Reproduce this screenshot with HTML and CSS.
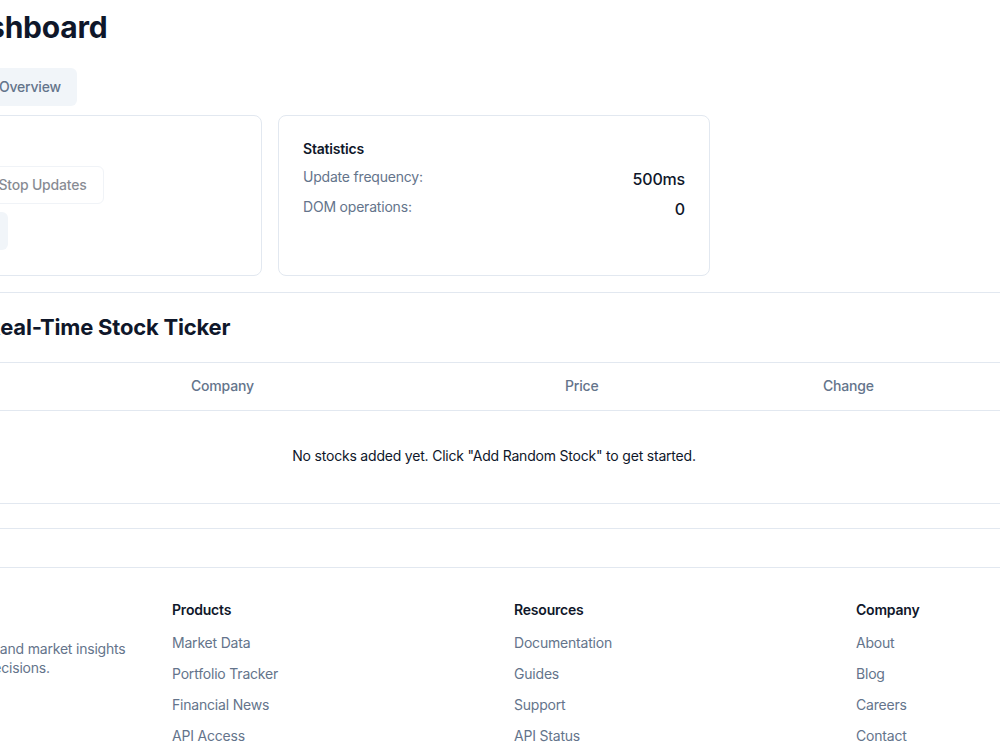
FILE: index.html
```html
<!DOCTYPE html>
<html lang="en">
<head>
<meta charset="utf-8">
<title>Market Dashboard</title>
<link rel="stylesheet" href="styles.css">
</head>
<body>
<div class="page">
  <header class="top">
    <h1 class="title">Market Dashboard</h1>
    <div class="tabs">
      <button class="tab tab-active">Real-Time Ticker</button>
      <button class="tab">Overview</button>
    </div>
  </header>

  <div class="cards">
    <div class="card panel controls">
      <h3 class="panel-title">Controls</h3>
      <div class="btn-row">
        <button class="btn btn-primary">Start Updates</button>
        <button class="btn btn-outline" disabled>Stop Updates</button>
        <button class="btn btn-secondary">Add Random Stock</button>
      </div>
    </div>
    <div class="card panel">
      <h3 class="panel-title">Statistics</h3>
      <div class="stat-row"><span class="stat-label">Update frequency:</span><span class="stat-value">500ms</span></div>
      <div class="stat-row"><span class="stat-label">DOM operations:</span><span class="stat-value">0</span></div>
    </div>
  </div>

  <section class="card ticker">
    <div class="ticker-head">
      <h2 class="ticker-title">Optimized Real-Time Stock Ticker</h2>
    </div>
    <div class="ticker-body">
      <table class="stock-table">
        <colgroup>
          <col class="c1"><col class="c2"><col class="c3"><col class="c4"><col class="c5">
        </colgroup>
        <thead>
          <tr><th>Symbol</th><th>Company</th><th>Price</th><th>Change</th><th>Volume</th></tr>
        </thead>
        <tbody>
          <tr><td class="empty" colspan="5">No stocks added yet. Click "Add Random Stock" to get started.</td></tr>
        </tbody>
      </table>
    </div>
  </section>

  <footer class="footer">
    <div class="footer-grid">
      <div class="footer-col">
        <div class="brand">StockTracker</div>
        <p class="brand-text">Get real-time stock prices and market insights to help you make better decisions.</p>
      </div>
      <div class="footer-col">
        <h4 class="footer-head">Products</h4>
        <ul class="links">
          <li><a href="#">Market Data</a></li>
          <li><a href="#">Portfolio Tracker</a></li>
          <li><a href="#">Financial News</a></li>
          <li><a href="#">API Access</a></li>
        </ul>
      </div>
      <div class="footer-col">
        <h4 class="footer-head">Resources</h4>
        <ul class="links">
          <li><a href="#">Documentation</a></li>
          <li><a href="#">Guides</a></li>
          <li><a href="#">Support</a></li>
          <li><a href="#">API Status</a></li>
        </ul>
      </div>
      <div class="footer-col">
        <h4 class="footer-head">Company</h4>
        <ul class="links">
          <li><a href="#">About</a></li>
          <li><a href="#">Blog</a></li>
          <li><a href="#">Careers</a></li>
          <li><a href="#">Contact</a></li>
        </ul>
      </div>
    </div>
  </footer>
</div>
</body>
</html>
```
FILE: styles.css
```css
* { box-sizing: border-box; }
html, body { margin: 0; padding: 0; overflow: hidden; background: #ffffff; }
body {
  font-family: Inter, "Noto Sans", "Liberation Sans", sans-serif;
  color: #0f172a;
  font-size: 14px;
  line-height: 20px;
  letter-spacing: -0.2px;
}
.page {
  width: 1328px;
  margin-left: -170px;
}
.top { padding-top: 9px; }
.title {
  margin: 0;
  padding-left: 10px;
  font-size: 30px;
  line-height: 36px;
  font-weight: 700;
  color: #0f172a;
}
.tabs {
  margin-top: 23px;
  margin-left: 19px;
  display: inline-flex;
  align-items: center;
  height: 38px;
  padding: 4px;
  background: #f1f5f9;
  border-radius: 6px;
}
.tab {
  font: inherit;
  font-weight: 500;
  font-size: 14px;
  line-height: 20px;
  letter-spacing: -0.2px;
  border: 0;
  background: transparent;
  color: #64748b;
  padding: 5px 12px;
  border-radius: 4px;
}
.tab-active { background: #ffffff; color: #0f172a; box-shadow: 0 1px 2px rgba(0,0,0,0.06); }

.cards {
  margin-top: 9px;
  display: grid;
  grid-template-columns: repeat(3, 1fr);
  gap: 16px;
}
.card {
  border: 1px solid #e2e8f0;
  border-radius: 8px;
  background: #fff;
}
.panel { padding: 23px 24px 25px; }
.controls { padding-left: 19px; padding-top: 22px; }
.panel-title {
  margin: 0 0 8px;
  font-size: 14px;
  line-height: 20px;
  font-weight: 600;
}
.btn-row { display: flex; flex-wrap: wrap; gap: 8px; }
.btn {
  font: inherit;
  font-size: 14px;
  font-weight: 500;
  letter-spacing: -0.2px;
  height: 38px;
  padding: 0 16px;
  border-radius: 6px;
  border: 1px solid transparent;
}
.btn-primary { background: #0f172a; color: #f8fafc; }
.btn-outline { background: #fff; border-color: #e2e8f0; color: #0f172a; }
.btn-outline:disabled { opacity: 0.5; }
.btn-secondary { background: #f1f5f9; color: #0f172a; }

.stat-row {
  display: flex;
  justify-content: space-between;
  align-items: flex-start;
  margin-bottom: 6px;
}
.stat-label { color: #64748b; font-size: 14px; line-height: 20px; }
.stat-value { font-size: 16px; line-height: 24px; font-weight: 500; }

.ticker { margin-top: 16px; }
.ticker-head { padding: 20px 24px 21px 42px; border-bottom: 1px solid #e2e8f0; }
.ticker-title {
  margin: 0;
  font-size: 22px;
  line-height: 28px;
  font-weight: 700;
}
.ticker-body { padding-bottom: 24px; border-radius: 0 0 8px 8px; }
.stock-table { width: 100%; border-collapse: collapse; table-layout: fixed; }
.c1 { width: 344px; }
.c2 { width: 374px; }
.c3 { width: 258px; }
.c4 { width: 220px; }
.stock-table th {
  height: 47px;
  padding: 0 16px;
  text-align: left;
  font-weight: 500;
  color: #64748b;
  border-bottom: 1px solid #e2e8f0;
}
.stock-table td.empty {
  padding: 35px 16px 37px;
  text-align: center;
  border-bottom: 1px solid #e2e8f0;
}

.footer { margin-top: 38px; border-top: 1px solid #e2e8f0; padding-top: 32px; }
.footer-grid { display: grid; grid-template-columns: repeat(4, 1fr); gap: 40px; }
.brand { font-size: 18px; line-height: 28px; font-weight: 700; margin-bottom: 11px; }
.brand-text { margin: 0; color: #64748b; line-height: 19px; }
.footer-head { margin: 0 0 13px; font-size: 14px; line-height: 20px; font-weight: 600; }
.links { list-style: none; margin: 0; padding: 0; display: flex; flex-direction: column; gap: 11px; }
.links a { color: #64748b; text-decoration: none; }
```
